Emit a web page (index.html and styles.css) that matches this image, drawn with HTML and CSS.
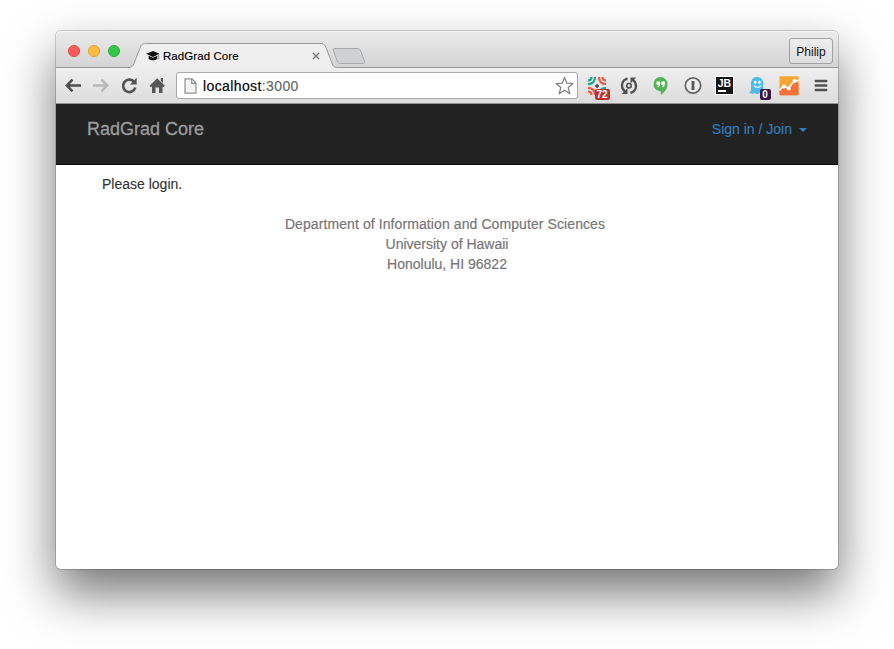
FILE: index.html
```html
<!DOCTYPE html>
<html lang="en">
<head>
<meta charset="utf-8">
<title>RadGrad Core</title>
<link rel="stylesheet" href="styles.css">
</head>
<body>
<div class="window">
  <div class="tabstrip">
    <div class="lights"><i class="close"></i><i class="minimize"></i><i class="maximize"></i></div>
    <div class="tab">
      <svg class="tab-shape" width="208" height="26" viewBox="0 0 208 26">
        <path d="M-2 26V24.500C1.500 24.500 2.800 23.500 4 20.500L9.800 5.500C11.300 1.500 12.500.5 15.500.5H190C193.500.5 195 1.500 196.300 5.500L202 20C203 23 204 24.500 208 24.500V26Z" fill="#efefef"/>
        <path d="M-2 24.500C1.500 24.500 2.800 23.500 4 20.500L9.800 5.500C11.300 1.500 12.500.5 15.500.5H190C193.500.5 195 1.500 196.300 5.500L202 20C203 23 204 24.500 208 24.500" fill="none" stroke="#979797"/>
      </svg>
      <svg class="favicon" width="14" height="12" viewBox="0 0 14 12"><path d="M.2 3.800 7 1 13.500 3.800 7 6.900ZM2.600 5.700 7 7.700 11.300 5.700V9C9 10.800 5 10.800 2.600 9Z" fill="#111"/><path d="M12.700 4.300V9" stroke="#777" stroke-width=".8"/></svg>
      <span class="tab-title">RadGrad Core</span>
      <svg class="tab-close" width="8" height="8" viewBox="0 0 8 8"><path d="M1 1 7 7M7 1 1 7" stroke="#777" stroke-width="1.400"/></svg>
    </div>
    <svg class="newtab" width="34" height="18" viewBox="0 0 34 18"><path d="M3 1.500H25C27 1.500 28 2 28.800 4L32.300 13.500C33 15.500 32.500 16.500 31 16.500H9C7 16.500 6 16 5.200 14L1.500 4C.8 2 1.500 1.500 3 1.500Z" fill="#d0d1d2" stroke="#a9a9a9"/></svg>
    <div class="profile">Philip</div>
  </div>

  <div class="toolbar">
    <div class="nav-icons">
      <svg viewBox="0 0 28 20"><path d="M22 9.500H8M13.500 3.700 7.800 9.500 13.500 15.300" fill="none" stroke="#505050" stroke-width="2.500"/></svg>
      <svg viewBox="0 0 28 20"><path d="M6 9.500H20M14.500 3.700 20.200 9.500 14.500 15.300" fill="none" stroke="#b9b9b9" stroke-width="2.500"/></svg>
      <svg viewBox="0 0 28 20"><path d="M18.800 5.500A6.200 6.200 0 1 0 20.300 11.500" fill="none" stroke="#545454" stroke-width="2.700"/><path d="M21.700 1.800V8.500H14.900Z" fill="#545454"/></svg>
      <svg viewBox="0 0 28 20"><path d="M6.600 9.800 14.200 2.300 21.800 9.800 20.400 11.200 19.500 10.500V17H16V11.500H12.500V17H9V10.500L8 11.200ZM17.800 2H20V7L17.800 4.800Z" fill="#575757"/></svg>
    </div>
    <div class="omnibox">
      <svg class="page" width="13" height="16" viewBox="0 0 13 16"><path d="M1 .8H8L12 5V15.200H1ZM7.700 1V5.300H12" fill="#f5f5f5" stroke="#909090" stroke-width="1.200"/></svg>
      <span class="url">localhost<span class="port">:3000</span></span>
      <svg class="star" width="20" height="20" viewBox="0 0 20 20"><path d="M9.500 1.400 11.800 7.200 18 7.500 13.200 11.500 14.900 17.800 9.500 14.200 4.100 17.800 5.800 11.500 1 7.500 7.200 7.200Z" fill="#fff" stroke="#7d7d7d" stroke-width="1.200" stroke-linejoin="round"/></svg>
    </div>
    <div class="extensions">
      <div class="ext">
        <svg width="20" height="20" viewBox="0 0 20 20"><g fill="none" stroke-width="2.200"><g stroke="#1fa890"><path d="M1 8.200C5.500 8 8 5.500 8 1"/><path d="M1 4.500C3.500 4.300 4.500 3 4.500 1"/></g><g stroke="#e85a4c"><path d="M12 1C12 5.500 14.500 8 19 8.200"/><path d="M15.500 1C15.500 3 16.500 4.300 19 4.500"/></g><g stroke="#e85a4c"><path d="M1 11.800C5.500 12 8 14.500 8 19"/><path d="M1 15.500C3.500 15.700 4.500 17 4.500 19"/></g><path d="M12 19C12 14.500 14.500 12 19 11.800" stroke="#1fa890"/></g><path d="M10 7.800 12.200 10 10 12.200 7.800 10Z" fill="#45434b"/></svg>
        <span class="badge red">72</span>
      </div>
      <div class="ext"><svg width="20" height="20" viewBox="0 0 20 20"><g fill="none" stroke="#505050" stroke-width="2.300"><path d="M8.600 3H7.200Q3 5 3 9.500C3 12 4 14 6 15.600"/><path d="M11.400 16.500H12.800Q17 14.500 17 10C17 7.500 16 5.500 14 3.900"/></g><path d="M2.800 17.900H8.500V12ZM17.200 1.600H11.500V7.500Z" fill="#505050"/><circle cx="10" cy="9.700" r="2.200" fill="none" stroke="#505050" stroke-width="1.600"/></svg></div>
      <div class="ext"><svg width="20" height="20" viewBox="0 0 20 20"><path d="M9.500 1A7 7 0 0 1 16.500 8.300C16.500 12.500 13.500 16.500 9.800 19V15.300A7 7 0 0 1 2.500 8.200 7 7 0 0 1 9.500 1Z" fill="#53b457"/><path d="M5.500 5.500H9V8.500C9 10 8.200 11 6.500 11.300V9.900C7.300 9.600 7.500 9.300 7.500 8.800H5.500ZM10.300 5.500H13.800V8.500C13.800 10 13 11 11.300 11.300V9.900C12.100 9.600 12.300 9.300 12.300 8.800H10.300Z" fill="#fff"/></svg></div>
      <div class="ext"><svg width="20" height="20" viewBox="0 0 20 20"><circle cx="10" cy="9.500" r="7.700" fill="#ededed" stroke="#656565" stroke-width="1.700"/><path d="M8.500 5H11.500V8.500L11 9.500 11.500 10.300V14H8.500V10.500L9 9.500 8.500 8.700Z" fill="#5a5a5a"/></svg></div>
      <div class="ext"><span class="jb">JB</span></div>
      <div class="ext">
        <svg class="ghost" width="20" height="20" viewBox="0 0 20 20"><path d="M4 7.500C4 3.500 6.200 1 10 1S16.200 3.500 16.200 7.500V14.500C16.200 16.500 16 17.500 17 18 15 18.500 13.500 17.500 12.700 16.500 11.500 18.500 9 18.500 8 16.500 6.500 18.500 4 18 2.300 16.300 4 15.500 4 14 4 12Z" fill="#4fbce8"/><ellipse cx="8.300" cy="6.300" rx="1.200" ry="1.700" fill="#fff"/><ellipse cx="12.400" cy="6.300" rx="1.200" ry="1.700" fill="#fff"/><path d="M7 9.500C8.500 12 12.500 12 13.700 9.500" fill="none" stroke="#fff" stroke-width="1.200"/></svg>
        <span class="badge purple">0</span>
      </div>
      <div class="ext"><svg width="20" height="20" viewBox="0 0 20 20"><rect x=".5" y=".3" width="19" height="19" rx="1" fill="#f9a536"/><path d="M.5 14.500 5 10 9.500 13.200 15.500 5 19.500 7V18.300Q19.500 19.300 18.500 19.300H1.500Q.5 19.300.5 18.300Z" fill="#f5703a"/><path d="M.5 14.200 5 10 9.500 12.500 15.300 4.700 19.500 4.500" fill="none" stroke="#fff" stroke-width="1.600"/><g fill="#fff"><circle cx="5" cy="10.500" r="2"/><circle cx="9.700" cy="12.500" r="2"/><circle cx="15.500" cy="5" r="2"/></g></svg></div>
      <div class="ext"><svg width="20" height="20" viewBox="0 0 20 20"><path d="M4.800 5H15.200M4.800 9.500H15.200M4.800 14H15.200" stroke="#515151" stroke-width="2.500" stroke-linecap="round"/></svg></div>
    </div>
  </div>

  <header class="navbar">
    <span class="brand">RadGrad Core</span>
    <span class="signin">Sign in / Join <i class="caret"></i></span>
  </header>
  <main class="content">
    <p class="message">Please login.</p>
    <footer><div class="dept">Department of Information and Computer Sciences</div><div class="univ">University of Hawaii</div><div class="city">Honolulu, HI 96822</div></footer>
  </main>
</div>
</body>
</html>
```
FILE: styles.css
```css
* { box-sizing: border-box; }
html, body { height: 100%; }
body {
  margin: 0;
  padding: 31px 56px 80px;
  background: #fff;
  overflow: hidden;
  font: 14px/20px "Liberation Sans", Arial, sans-serif;
  color: #333;
}
svg { display: block; flex: none; }
.window {
  height: 538px;
  border-radius: 5px;
  background: #fff;
  box-shadow: 0 0 0 1px rgba(0, 0, 0, .17), 0 24px 50px rgba(0, 0, 0, .55);
}
.tabstrip {
  display: flex;
  height: 37px;
  border-radius: 5px 5px 0 0;
  border-bottom: 1px solid #979797;
  background: linear-gradient(#ebebeb, #d4d4d4);
  box-shadow: inset 0 1px #f6f6f6;
}
.lights { display: flex; gap: 8px; padding: 14px 0 0 12px; width: 74px; }
.lights i { width: 12px; height: 12px; border-radius: 50%; border: 1px solid; }
.lights .close { background: #fc5b57; border-color: #e2463f; }
.lights .minimize { background: #fdbc40; border-color: #e0a02f; }
.lights .maximize { background: #34c84a; border-color: #24ad36; }
.tab {
  position: relative;
  display: flex;
  align-items: center;
  width: 208px;
  height: 26px;
  margin-top: 12px;
  padding: 0 18px 0 16px;
}
.tab-shape { position: absolute; left: 0; top: 0; overflow: visible; }
.favicon, .tab-title, .tab-close { position: relative; }
.tab-title { margin-left: 3px; font-size: 11.5px; letter-spacing: .07px; color: #000; white-space: nowrap; -webkit-text-stroke: .15px; }
.tab-close { margin-left: auto; }
.newtab { margin: 16px 0 0 -6px; }
.profile {
  width: 44px;
  height: 26px;
  margin: 7px 5px 0 auto;
  border: 1px solid #a2a2a2;
  border-radius: 3px;
  background: linear-gradient(#eee, #dedede);
  color: #111;
  font-size: 12px;
  line-height: 26px;
  text-align: center;
}
.toolbar {
  display: flex;
  align-items: center;
  height: 36px;
  padding-left: 3px;
  border-bottom: 1px solid #929292;
  background: linear-gradient(#efefef, #dcdcdc);
}
.nav-icons { display: flex; width: 117px; }
.nav-icons svg { width: 28px; height: 20px; }
.omnibox {
  display: flex;
  align-items: center;
  width: 402px;
  height: 27px;
  padding: 0 2px 0 7px;
  border: 1px solid #a9a9a9;
  border-radius: 3px;
  background: #fff;
}
.url { margin-left: 6px; font-size: 14px; letter-spacing: .39px; color: #000; -webkit-text-stroke: .15px; }
.port { color: #666; }
.star { margin-left: auto; }
.extensions { display: flex; margin-left: 2.5px; }
.ext { position: relative; display: flex; justify-content: center; width: 32px; height: 20px; }
.badge {
  position: absolute;
  color: #fff;
  font: bold 10px/11px "Liberation Sans", Arial, sans-serif;
  text-align: center;
  border-radius: 2px;
}
.red { left: 14px; top: 13px; width: 15px; height: 11px; background: #b9342f; }
.purple { left: 19px; top: 13px; width: 11px; height: 11px; background: #3b1447; }
.jb {
  position: relative;
  width: 19px;
  height: 19px;
  border: 1px solid #fff;
  background: #151515;
  color: #fff;
  font: bold 10.5px/12px "Liberation Sans", Arial, sans-serif;
  text-align: center;
}
.jb::after { content: ""; position: absolute; left: 2px; bottom: 2px; width: 8px; height: 1.5px; background: #fff; }
.navbar {
  display: flex;
  justify-content: space-between;
  height: 61px;
  padding: 15px 31px 0 31px;
  border-bottom: 1px solid #080808;
  background: #222;
}
.brand { color: #9d9d9d; font-size: 18px; -webkit-text-stroke: .3px; }
.signin { display: flex; height: 20px; color: #337ab7; -webkit-text-stroke: .2px; }
.caret { margin: 9px 0 0 7px; height: 0; border: 4px solid transparent; border-top-color: #337ab7; border-bottom: 0; }
.content { padding: 9px 0 0; }
.message { margin: 0 0 20px 46px; -webkit-text-stroke: .1px; }
footer { text-align: center; color: #777; -webkit-text-stroke: .2px; }
.dept { padding-right: 4px; letter-spacing: .09px; }
```
